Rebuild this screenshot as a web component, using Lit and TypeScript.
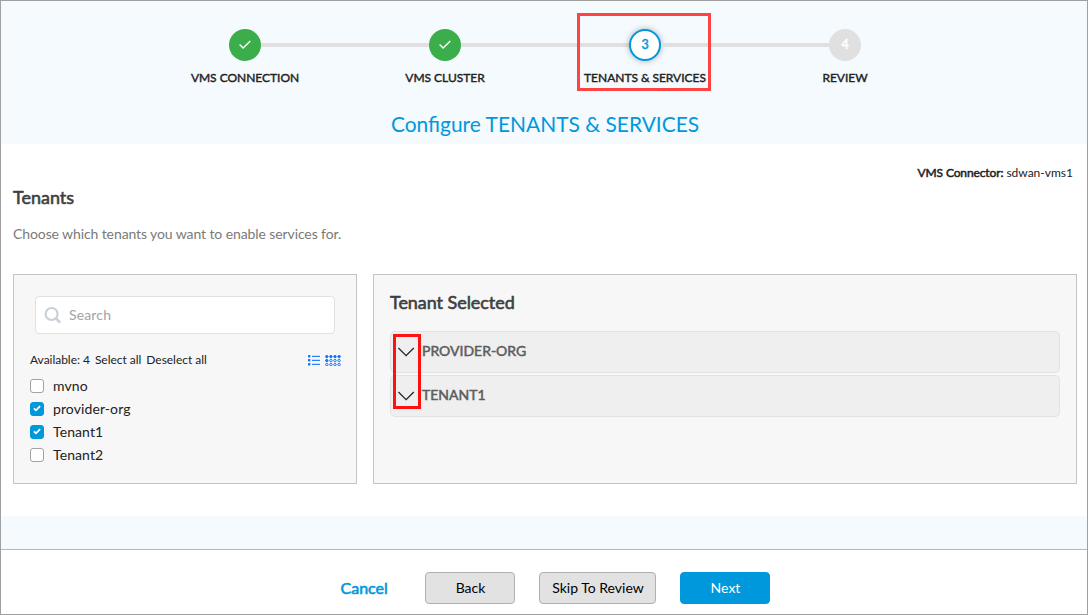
import { LitElement, html, svg, css } from "lit";
import { customElement, property, state } from "lit/decorators.js";
import { classMap } from "lit/directives/class-map.js";

interface Step { label: string; status: "done" | "current" | "todo"; }
interface Tenant { name: string; checked: boolean; }

@customElement("wizard-steps")
class WizardSteps extends LitElement {
  @property({ attribute: false }) steps: Step[] = [];

  static styles = css`
    :host { display: block; }
    .steps { display: flex; justify-content: center; }
    .step { width: 200px; display: flex; flex-direction: column; align-items: center; position: relative; }
    .rail { width: 100%; display: flex; align-items: center; height: 32px; }
    .line { flex: 1; height: 4px; background: #e0e0e0; }
    .step:first-child .line:first-child, .step:last-child .line:last-child { background: transparent; }
    .dot { width: 32px; height: 32px; box-sizing: border-box; border-radius: 50%; display: flex; align-items: center; justify-content: center; font-size: 12.5px; line-height: 16px; -webkit-text-stroke: 0.5px currentColor; }
    .done { background: #3bae4b; }
    .current { background: #fff; border: 2px solid #0098dc; color: #0098dc; box-shadow: 0 0 6px rgba(0, 0, 0, 0.3); }
    .todo { background: #e0e0e0; color: #fff; }
    .label { margin-top: 8px; font-size: 12px; line-height: 17px; color: #222; white-space: nowrap; letter-spacing: -0.03px; -webkit-text-stroke: 0.4px currentColor; }
    .mark { position: absolute; left: 32px; top: -16px; width: 134px; height: 78px; box-sizing: border-box; border: 3px solid #ff4343; }
  `;

  render() {
    return html`<div class="steps">${this.steps.map((s, i) => html`
      <div class="step">
        <div class="rail">
          <span class="line"></span>
          <span class=${classMap({ dot: true, [s.status]: true })}>${s.status === "done"
            ? html`<svg width="14" height="12" viewBox="0 0 14 12"><path d="M1.6 5.4L5.1 8.9L12.3 1.9" fill="none" stroke="#fff" stroke-width="1.4"/></svg>`
            : i + 1}</span>
          <span class="line"></span>
        </div>
        <div class="label">${s.label}</div>
        ${s.status === "current" ? html`<div class="mark"></div>` : ""}
      </div>`)}</div>`;
  }
}

@customElement("tenant-picker")
class TenantPicker extends LitElement {
  @property({ attribute: false }) tenants: Tenant[] = [];

  static styles = css`
    :host { display: block; box-sizing: border-box; width: 344px; height: 210px; background: #f7f7f7; border: 1px solid #c4c4c4; padding: 21px 15px 0 16px; }
    .search { margin-left: 5px; width: 300px; height: 38px; box-sizing: border-box; border: 1px solid #e1e1e1; border-radius: 4px; background: #fff; display: flex; align-items: center; gap: 7px; padding-left: 8px; font-size: 14px; color: #a3a3a3; }
    .term { line-height: 18px; letter-spacing: 0.15px; }
    .bar { display: flex; align-items: center; height: 16px; margin-top: 18px; font-size: 12px; line-height: 16px; color: #222; white-space: pre; }
    .links { flex: 1; display: flex; gap: 5px; letter-spacing: -0.03px; }
    .views { display: flex; gap: 5px; padding-top: 1px; }
    .list { margin-top: 6px; }
    .item { display: flex; align-items: center; height: 23px; gap: 9px; font-size: 14px; line-height: 23px; letter-spacing: 0.1px; color: #222; }
    .box { width: 14px; height: 14px; box-sizing: border-box; border: 1px solid #a2a2a2; border-radius: 3px; background: #fff; display: flex; align-items: center; justify-content: center; }
    .on { background: #0098dc; border-color: #0098dc; }
    svg { display: block; }
  `;

  render() {
    const cells = [0, 1, 2, 3].flatMap((c) => [0, 1, 2].map((r) => ({ c, r })));
    return html`
      <div class="search">
        <svg width="18" height="18" viewBox="0 0 18 18" fill="none" stroke="#c8d0d8" stroke-width="2.2"><circle cx="7.6" cy="8" r="6"/><path d="M12 12.4L16.2 16.6" stroke-width="2.6"/></svg>
        <span class="term">Search</span>
      </div>
      <div class="bar">
        <div class="links"><span>Available: 4</span><span>Select all</span><span>Deselect all</span></div>
        <div class="views">
          <svg width="12" height="11" viewBox="0 0 12 11" fill="#0d78ff">${[0, 4, 8].map((y) => svg`<rect x="0" y=${y} width="2.4" height="2.4" rx=".6"/><rect x="4" y=${y + 0.8} width="8" height="1.1"/>`)}</svg>
          <svg width="16" height="11" viewBox="0 0 16 11" stroke="#0d78ff">${cells.map(({ c, r }) => svg`<circle cx=${1.8 + c * 4.1} cy=${1.6 + r * 4} r="1.2" fill=${r === 0 || (r === 1 && c === 0) ? "#0d78ff" : "none"} stroke-width="1"/>`)}</svg>
        </div>
      </div>
      <div class="list">${this.tenants.map((t) => html`
        <div class="item">
          <span class=${classMap({ box: true, on: t.checked })}>${t.checked
            ? html`<svg width="8" height="7" viewBox="0 0 8 7"><path d="M.9 3.3L3 5.3L7.1 1.2" fill="none" stroke="#fff" stroke-width="1.8"/></svg>` : ""}</span>
          <span>${t.name}</span>
        </div>`)}</div>`;
  }
}

@customElement("tenant-selected")
class TenantSelected extends LitElement {
  @property({ attribute: false }) names: string[] = [];

  static styles = css`
    :host { display: block; box-sizing: border-box; width: 704px; height: 210px; background: #f7f7f7; border: 1px solid #c4c4c4; padding: 15px 16px; }
    .title { font-size: 18px; line-height: 24px; letter-spacing: -0.05px; color: #3f3f3f; -webkit-text-stroke: 0.6px currentColor; }
    .rows { position: relative; margin-top: 17px; display: flex; flex-direction: column; gap: 2px; }
    .row { height: 42px; box-sizing: border-box; border: 1px solid #e2e2e2; border-radius: 5px; background: #efefef; display: flex; align-items: center; gap: 7px; padding: 0 0 2px 7px; font-size: 14px; line-height: 18px; color: #5c5c5c; -webkit-text-stroke: 0.5px currentColor; }
    .chevron { margin-top: 2px; }
    .mark { position: absolute; left: 3px; top: 3px; width: 28px; height: 75px; box-sizing: border-box; border: 3px solid #ff1111; }
  `;

  render() {
    return html`
      <div class="title">Tenant Selected</div>
      <div class="rows">
        ${this.names.map((n) => html`<div class="row">
          <svg class="chevron" width="17" height="10" viewBox="0 0 17 10"><path d="M.4 1L8.1 8.6L15.8 1" fill="none" stroke="#222" stroke-width="1.3"/></svg>
          <span>${n.toUpperCase()}</span>
        </div>`)}
        <div class="mark"></div>
      </div>`;
  }
}

@customElement("app-root")
class AppRoot extends LitElement {
  @state() private tenants: Tenant[] = [
    { name: "mvno", checked: false },
    { name: "provider-org", checked: true },
    { name: "Tenant1", checked: true },
    { name: "Tenant2", checked: false },
  ];

  private steps: Step[] = [
    { label: "VMS CONNECTION", status: "done" },
    { label: "VMS CLUSTER", status: "done" },
    { label: "TENANTS & SERVICES", status: "current" },
    { label: "REVIEW", status: "todo" },
  ];

  static styles = css`
    :host { display: flex; flex-direction: column; box-sizing: border-box; width: 1088px; height: 615px; border: 1px solid #a0a0a0; background: #fff; font-family: Lato, "Liberation Sans", sans-serif; overflow: hidden; }
    .head { height: 143px; box-sizing: border-box; background: #f4fafd; padding: 28px 0 0 2px; }
    .heading { margin-top: 24px; text-align: center; font-size: 20.95px; line-height: 28px; color: #0098dc; }
    .body { flex: 1; padding: 0 10px 0 12px; }
    .connector { margin: 21px 4px 0 0; text-align: right; font-size: 12px; line-height: 16px; color: #222; }
    .strong { letter-spacing: -0.12px; -webkit-text-stroke: 0.5px currentColor; }
    .title { margin-top: 4px; font-size: 18px; line-height: 24px; color: #3f3f3f; -webkit-text-stroke: 0.6px currentColor; }
    .hint { margin-top: 16px; font-size: 14px; line-height: 18px; letter-spacing: -0.1px; color: #7a7a7a; }
    .panels { margin-top: 31px; display: flex; gap: 16px; }
    .band { height: 33px; background: #f4fafd; }
    .foot { height: 65px; box-sizing: border-box; border-top: 1px solid #b8b8b8; display: flex; justify-content: center; align-items: flex-start; padding: 22px 0 0 22px; gap: 24px; font-size: 14px; }
    .cancel { width: 48px; margin-right: 12px; line-height: 32px; font-size: 16px; color: #0098dc; -webkit-text-stroke: 0.6px currentColor; }
    .btn { width: 90px; height: 32px; box-sizing: border-box; border: 1px solid #b0b0b0; border-radius: 4px; background: #e2e2e2; color: #000; font: 14px/30px Lato, sans-serif; padding: 0 0 0 2px; text-align: center; white-space: nowrap; }
    .wide { width: 117px; }
    .primary { background: #0098dc; border-color: #0098dc; color: #fff; }
  `;

  render() {
    return html`
      <div class="head">
        <wizard-steps .steps=${this.steps}></wizard-steps>
        <div class="heading">Configure TENANTS &amp; SERVICES</div>
      </div>
      <div class="body">
        <div class="connector"><span class="strong">VMS Connector:</span> sdwan-vms1</div>
        <div class="title">Tenants</div>
        <div class="hint">Choose which tenants you want to enable services for.</div>
        <div class="panels">
          <tenant-picker .tenants=${this.tenants}></tenant-picker>
          <tenant-selected .names=${this.tenants.filter((t) => t.checked).map((t) => t.name)}></tenant-selected>
        </div>
      </div>
      <div class="band"></div>
      <div class="foot">
        <span class="cancel">Cancel</span>
        <button class="btn">Back</button>
        <button class="btn wide">Skip To Review</button>
        <button class="btn primary">Next</button>
      </div>`;
  }
}
